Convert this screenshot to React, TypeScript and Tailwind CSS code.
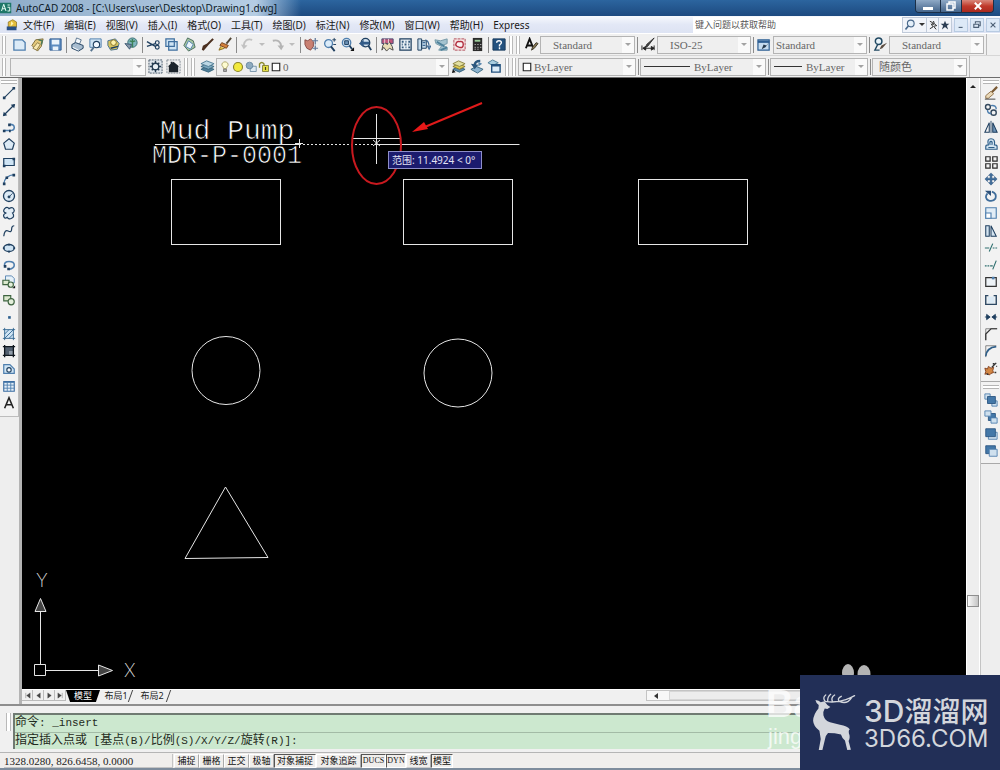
import type { ReactNode } from 'react';
import clsx from 'clsx';

const navy = '#1f3f5f';
const blue = '#4f7fae';
const pale = '#cfe4f4';

const icons: Record<string, ReactNode> = {
  new: <path d="M2 3h9l3 3v8H2z" fill="#dcebf7" stroke={blue} strokeWidth="1.4" />,
  open: (
    <>
      <path d="M2 9l4-6 8-1-2 8-4 5z" fill="#e3c87c" stroke="#7a6a3a" />
      <path d="M3 12l5-6 3 2-4 6z" fill="#f7e7b0" stroke="#8c7b45" />
      <path d="M9 3l4 1-1 4" fill="none" stroke="#4b7a59" strokeWidth="1.5" />
    </>
  ),
  save: (
    <>
      <path d="M2 2h12v12H2z" fill="#5d8cc0" stroke="#2f5d92" />
      <path d="M4 3h8v5H4zM5 10h6v4H5z" fill="#eaf3fb" />
    </>
  ),
  print: (
    <>
      <path d="M5 7l2-6 5 2-2 5" fill="#f4f8fc" stroke="#5d7690" />
      <path d="M2 8l4-2 8 3v3l-5 3-7-3z" fill="#a9bdd0" stroke={navy} />
      <path d="M3 11l6 3" stroke="#fff" />
    </>
  ),
  preview: (
    <>
      <path d="M2 2h12v9H2z" fill={pale} stroke={blue} />
      <circle cx="9" cy="8" r="3.4" fill="#f3f9ff" stroke={navy} strokeWidth="1.2" />
      <path d="M6.500 10.500L3 15" stroke="#56748f" strokeWidth="2" />
    </>
  ),
  publish: (
    <>
      <path d="M2 4l8-2 4 5-2 6-7 1-3-5z" fill="#d7c45f" stroke="#46708f" />
      <circle cx="8" cy="6" r="3" fill="#fff3a8" stroke="#806d26" />
      <path d="M5 12l8-2" stroke={navy} strokeWidth="1.5" />
    </>
  ),
  globe: (
    <>
      <circle cx="9" cy="6" r="5" fill="#7fb6bf" stroke="#3a6d70" />
      <path d="M6 4q3 2 6 0M9 2v9" stroke="#3c8055" strokeWidth="1.5" fill="none" />
      <path d="M1 7l7 1-2 5z" fill="#8798aa" stroke="#3a5670" />
    </>
  ),
  cut: (
    <>
      <path d="M1 5l9 5M1 10l9-3" stroke={navy} strokeWidth="1.4" />
      <circle cx="12" cy="6" r="2" fill="none" stroke={navy} strokeWidth="1.3" />
      <circle cx="12" cy="11" r="2" fill="none" stroke={navy} strokeWidth="1.3" />
    </>
  ),
  copy: <path d="M2 2h9v8H2zM5 5h9v9H5z" fill={pale} stroke="#3f6f9e" strokeWidth="1.3" />,
  paste: (
    <>
      <path d="M6 1l6 3 2 7-7 4-5-6z" fill="#a7c7a1" stroke="#466b5c" />
      <path d="M7 4l5 4-3 5-5-3z" fill="#eaf4fb" stroke={blue} />
    </>
  ),
  brush: <path d="M14 2L8 8M8 8l-5 6 1-4z" stroke="#4b2f1f" strokeWidth="2.2" fill="#4b2f1f" />,
  match: (
    <>
      <path d="M14 1L9 7" stroke="#514637" strokeWidth="2" />
      <path d="M4 6l7 3-2 3-7-3z" fill="#d4803b" stroke="#74411c" />
      <path d="M3 10l-2 4 6-2" fill="#e9c64a" stroke="#8a6c1f" />
    </>
  ),
  undo: (
    <>
      <path d="M13 3Q5 1 4 9" fill="none" stroke="#c2c2c2" strokeWidth="2" />
      <path d="M1 8l3 5 4-4z" fill="#c2c2c2" />
    </>
  ),
  redo: (
    <>
      <path d="M3 4q8-2 9 6" fill="none" stroke="#b4b4b4" strokeWidth="2" />
      <path d="M8 9l4 5 3-5z" fill="#b4b4b4" />
    </>
  ),
  pan: (
    <>
      <path d="M1 3l3 1 3-2 3 3v5l-3 4-4-2-2-4z" fill="#c98072" stroke="#874b45" />
      <path d="M12 1v7M9 4h6M12 9v5M9 12h6" stroke="#5f789a" strokeWidth="1.3" />
    </>
  ),
  zoomRt: (
    <>
      <circle cx="7" cy="7" r="4.200" fill="#dcecf9" stroke={blue} strokeWidth="1.4" />
      <path d="M9.500 10l4 5" stroke={navy} strokeWidth="2" />
      <path d="M11 3h4M13 1v4M12 8h3" stroke={navy} />
    </>
  ),
  zoomWin: (
    <>
      <circle cx="7" cy="6" r="4.500" fill="#cfe0ef" stroke={blue} strokeWidth="1.4" />
      <path d="M5 4h4v4H5z" fill="#6d93b7" stroke={navy} />
      <path d="M10 9l3 4" stroke={navy} strokeWidth="2" />
      <path d="M15 11v4h-4z" fill="#111" />
    </>
  ),
  zoomPrev: (
    <>
      <circle cx="8" cy="6" r="4.500" fill="#cfe0ef" stroke={navy} strokeWidth="1.5" />
      <path d="M11 9l3 5" stroke={navy} strokeWidth="2" />
      <path d="M1 7l5-4v2h6v3H6v3z" fill="#325b88" />
    </>
  ),
  props: (
    <>
      <path d="M2 2h12v5H2z" fill="#c0567c" stroke="#474a70" />
      <path d="M3 9l2-3 3 2 2-3 3 5 1 4-4-2-3 3-3-4-2 3z" fill="#e8ddb8" stroke="#454545" />
      <path d="M5 2v5M9 2v5" stroke="#e9d5df" />
    </>
  ),
  center: (
    <>
      <path d="M2 2h12v12H2z" fill="#eaf1f6" stroke={navy} strokeWidth="1.3" />
      <path d="M4 5h2M8 5h1M11 5h2M4 8h1M7 8h2M11 8h1M4 11h2M8 11h1M11 11h2" stroke="#33597d" strokeWidth="2" />
    </>
  ),
  palette: (
    <>
      <path d="M2 2h4v12H2zM6 4h5v8H6z" fill="#c7dcec" stroke={navy} />
      <path d="M7 6h3M7 9h3M10 3q4 1 4 8M12 9l2 4 2-4" stroke="#3f6a96" fill="none" strokeWidth="1.300" />
    </>
  ),
  sheet: (
    <>
      <path d="M1 3l6 1 7-2v5l-5 2 5 2v3H5l3-4-6-3z" fill="#a4c3cf" stroke="#7296a5" />
      <path d="M3 5l8 5M7 14l7-3" stroke="#4e819b" strokeWidth="2" />
    </>
  ),
  markup: (
    <>
      <path d="M2 2h12v12H2z" fill="#f6e4e4" stroke="#b04a56" strokeDasharray="3 1" />
      <path d="M4 8q1-4 4-3 4-1 4 3t-4 3-4-3z" fill="#f9f3f3" stroke="#b22f40" strokeWidth="1.5" />
    </>
  ),
  calc: (
    <>
      <path d="M3 1h10v14H3z" fill="#2b2b2b" />
      <path d="M5 3h6v2H5z" fill="#9ecf9c" />
      <path d="M5 8h1M8 8h1M11 8h1M5 11h1M8 11h1M11 11h1M5 13h1M8 13h1" stroke="#eee" />
    </>
  ),
  help: (
    <>
      <path d="M1 2h13v12H1z" fill="#24527f" stroke="#173a5d" />
      <path d="M5 6q0-2 2.500-2T10 6q0 1-2 2.500V10M8 11v2" fill="none" stroke="#fff" strokeWidth="1.500" />
    </>
  ),
  gear: (
    <>
      <path d="M1 1h14v14H1z" fill="#dfe6ec" stroke="#47596a" strokeDasharray="2 1" />
      <path d="M8 2v12M2 8h12M4 4l8 8M12 4l-8 8" stroke="#253c52" strokeWidth="1.500" />
      <circle cx="8" cy="8" r="3.500" fill="#e9f0f5" stroke="#253c52" strokeWidth="1.500" />
    </>
  ),
  home: (
    <>
      <path d="M1 1h14v14H1z" fill="none" stroke="#7d8791" strokeDasharray="2 1" />
      <path d="M2 8l3-3V3h2v1l1-1 6 5h-1v6H3V8z" fill="#1c242c" />
    </>
  ),
  layers: (
    <>
      <path d="M1 11l6-3 8 3-6 3z" fill="#4f7f99" stroke="#3a667f" />
      <path d="M1 8l6-3 8 3-6 3z" fill="#7ba7bd" stroke="#3a667f" />
      <path d="M1 5l6-3 8 3-6 3z" fill="#bcd7e4" stroke="#4f7d95" />
    </>
  ),
  layerState: (
    <>
      <path d="M2 11l6-3 7 3-6 3z" fill="#5b89a8" stroke="#38637f" />
      <path d="M2 8l6-3 7 3-6 3z" fill="#d9c955" stroke="#85772a" />
      <path d="M2 5l6-3 7 3-6 3z" fill="#e2dfa0" stroke="#8b8341" />
      <path d="M1 15l1-4 3 3z" fill="#111" />
    </>
  ),
  layerPrev: (
    <>
      <path d="M2 11l6-3 7 3-6 4z" fill="#8bb2cf" stroke="#3a667f" />
      <path d="M12 2Q6 2 6 7" fill="none" stroke="#2d587f" strokeWidth="2.500" />
      <path d="M2 5l4 6 4-5z" fill="#2d587f" />
      <path d="M10 3l4 2-4 3z" fill="#5d89ad" />
    </>
  ),
  layerIso: (
    <>
      <path d="M1 4l5-3 6 3-6 3z" fill="#a8cde0" stroke="#4f7d95" />
      <path d="M5 6h9v8H5z" fill="#dcecf8" stroke="#24527f" strokeWidth="1.500" />
      <path d="M5 7h9" stroke="#24527f" strokeWidth="2" />
    </>
  ),
  textStyle: (
    <>
      <path d="M2 12L6 2l4 10M3 9h6" fill="none" stroke="#111" strokeWidth="2" />
      <path d="M15 7l-4 5-3 2 1-3 4-5z" fill="#8a7a55" stroke="#3d372b" />
    </>
  ),
  dimStyle: (
    <>
      <path d="M1 9v5M14 9v5M2 12h12M2 12l3-2v4zM14 12l-3-2v4z" stroke="#222" fill="#222" />
      <path d="M14 1L7 10l-2 1 1-3z" fill="#444" stroke="#333" />
    </>
  ),
  tableStyle: (
    <>
      <path d="M1 3h12v11H1z" fill="#c5dcf0" stroke="#2e5f93" strokeWidth="1.300" />
      <path d="M1 5h12" stroke="#2e5f93" strokeWidth="2.500" />
      <path d="M15 3l-6 8-4 2 2-5 3 1z" fill="#25394d" />
    </>
  ),
  leaderStyle: (
    <>
      <circle cx="6" cy="4.500" r="3.500" fill="#e9f3f8" stroke="#204861" strokeWidth="1.600" />
      <path d="M5 8l-3 6h5" stroke="#204861" fill="none" strokeWidth="1.500" />
      <path d="M15 6l-5 6-3 1 2-4z" fill="#594b3f" />
    </>
  ),
  line: (
    <>
      <path d="M3 13L13 3" stroke={navy} strokeWidth="1.300" />
      <path d="M1 12h3v3H1zM12 1h3v3h-3z" fill={navy} />
    </>
  ),
  xline: (
    <>
      <path d="M2 14L14 2" stroke={navy} strokeWidth="1.500" />
      <path d="M1 15l1-5 4 4zM15 1l-5 1 4 4z" fill={navy} />
    </>
  ),
  pline: (
    <>
      <path d="M2 12h7q5 0 5-3.500T9 5" fill="none" stroke={blue} strokeWidth="1.800" />
      <path d="M1 11h3v3H1zM8 11h2v3H8zM7 4h3v3H7z" fill={navy} />
    </>
  ),
  polygon: <path d="M8 2l6 5-2 7H4L2 7z" fill="#dceaf5" stroke={navy} strokeWidth="1.400" />,
  rect: (
    <>
      <path d="M2 4h12v8H2z" fill={pale} stroke={navy} strokeWidth="1.400" />
      <path d="M1 11h3v3H1zM12 3h3v3h-3z" fill={navy} />
    </>
  ),
  arc: (
    <>
      <path d="M2 14Q3 4 14 3" fill="none" stroke={blue} strokeWidth="1.600" />
      <path d="M1 12h3v3H1zM4 5h3v3H4zM12 2h3v3h-3z" fill={navy} />
    </>
  ),
  circle: (
    <>
      <circle cx="8" cy="8" r="6.300" fill="#dceaf5" stroke={navy} strokeWidth="1.500" />
      <path d="M8 9l4-4M7 8h2v2H7z" stroke={navy} fill={navy} />
    </>
  ),
  cloud: (
    <path
      d="M5 8Q0 7 3 3q3-3 5 0 5-3 6 2 0 2-2 3 3 4-1 6-3 2-5-1-3 2-4-1-1-3 3-4z"
      fill="#e3edf5"
      stroke={navy}
      strokeWidth="1.400"
    />
  ),
  spline: <path d="M2 14q1-8 5-6t4-2 3-4" fill="none" stroke={navy} strokeWidth="1.400" />,
  ellipse: (
    <>
      <ellipse cx="8" cy="8" rx="6" ry="4" fill={pale} stroke={navy} strokeWidth="1.500" />
      <path d="M1 7h2v2H1zM13 7h2v2h-2zM7 3h2v2H7zM7 11h2v2H7z" fill={navy} />
    </>
  ),
  ellipseArc: (
    <>
      <path d="M3 9Q2 4 8 4t6 4-6 5" fill="none" stroke={blue} strokeWidth="1.800" />
      <path d="M2 8h3v3H2zM6 11h3v3H6z" fill={navy} />
    </>
  ),
  insert: (
    <>
      <path d="M4 1h7l3 3v5H4z" fill="#e6f1f9" stroke={blue} />
      <path d="M1 6h7v5H1z" fill="#dce9cf" stroke="#3e6440" strokeWidth="1.300" />
      <circle cx="10" cy="11" r="3" fill="#e4efdc" stroke="#3e6440" strokeWidth="1.300" />
      <path d="M15 12v3h-3z" fill="#111" />
    </>
  ),
  block: (
    <>
      <path d="M2 3h8v6H2z" fill="#dce9cf" stroke="#3e6440" strokeWidth="1.300" />
      <circle cx="10.500" cy="10" r="3.500" fill="#e4efdc" stroke="#3e6440" strokeWidth="1.300" />
    </>
  ),
  point: <path d="M7 7h3v3H7z" fill="#2c5f8e" />,
  hatch: (
    <>
      <path d="M3 3h10v10H3z" fill={pale} />
      <path d="M3 1v14M13 1v14M1 3h14M1 13h14M3 8l5-5M3 13L13 3M8 13l5-5" stroke="#2f638f" />
    </>
  ),
  gradient: (
    <>
      <path d="M3 3h10v10H3z" fill="#536171" />
      <path d="M8 8h5v5H8z" fill="#8f9ba8" />
      <path d="M3 1v14M13 1v14M1 3h14M1 13h14" stroke="#101820" strokeWidth="1.500" />
    </>
  ),
  region: (
    <>
      <path d="M2 3h7l5 5v5H2z" fill={pale} stroke={blue} strokeWidth="1.400" />
      <circle cx="8" cy="9" r="2.500" fill="#f5f9fc" stroke={navy} strokeWidth="1.300" />
    </>
  ),
  table: (
    <>
      <path d="M2 3h12v11H2z" fill="#e5eff8" stroke="#3d6da1" strokeWidth="1.300" />
      <path d="M2 4h12M2 7h12M2 10.500h12M6 3v11M10 3v11" stroke="#4f7fae" />
    </>
  ),
  mtext: <path d="M3 14L8 2l5 12M5 10h6" fill="none" stroke="#222" strokeWidth="1.800" />,
  erase: (
    <>
      <path d="M15 1L8 8" stroke="#7a5a35" strokeWidth="2.500" />
      <path d="M2 11l6-5 3 3-6 5H2z" fill="#ead9b8" stroke="#8a6b43" />
      <path d="M1 15h12" stroke="#333" />
    </>
  ),
  copyObj: (
    <>
      <circle cx="4.500" cy="4.500" r="2.800" fill="none" stroke="#34495e" strokeWidth="1.600" />
      <circle cx="11" cy="11" r="3" fill="none" stroke="#34495e" strokeWidth="1.600" />
      <path d="M8 3q6-1 6 4M4 8q0 4 4 4" fill="none" stroke={blue} strokeWidth="1.600" />
    </>
  ),
  mirror: (
    <>
      <path d="M6 3v11H1z" fill="#f2f2f2" stroke={navy} strokeWidth="1.200" />
      <path d="M10 3v11h5z" fill="#6d93b7" stroke={navy} strokeWidth="1.200" />
      <path d="M8 1v14" stroke={navy} />
    </>
  ),
  offset: (
    <path
      d="M2 14v-3q0-2 3-2-2-7 3-7t4 7q3 0 3 2v3zM5 12h7M7 9q-1-4 1-4t1 4"
      fill="#d2e4f1"
      stroke="#2f5f89"
      strokeWidth="1.300"
    />
  ),
  array: <path d="M2 2h5v5H2zM10 2h5v5h-5zM2 10h5v5H2zM10 10h5v5h-5z" fill="#f2f2f2" stroke="#2b2b2b" strokeWidth="1.400" />,
  move: (
    <path
      d="M8 1l3 3H9v3h3V5l3 3-3 3V9H9v3h2l-3 3-3-3h2V9H4v2L1 8l3-3v2h3V4H5z"
      fill="#3f6d9b"
      stroke="#2c5079"
      strokeWidth="0.500"
    />
  ),
  rotate: (
    <>
      <path d="M4 5q-4 5 1 8 5 2 8-2 2-6-4-8" fill="none" stroke="#3f6d9b" strokeWidth="2" />
      <path d="M1 2h7v6z" fill="#2c5079" />
    </>
  ),
  scale: (
    <>
      <path d="M2 2h12v12H2z" fill="#e2edf6" stroke={blue} strokeWidth="1.300" />
      <path d="M2 8h6v6H2z" fill="#fff" stroke={blue} strokeWidth="1.300" />
    </>
  ),
  stretch: <path d="M2 2h4v12H2zM8 2l6 12H8z" fill="#d4e4f0" stroke={navy} strokeWidth="1.200" />,
  trim: <path d="M1 8h5M10 8h2M13 8h2M6 12l4-9" stroke="#2f6f6f" strokeWidth="1.300" />,
  extend: <path d="M1 9h2M4 9h2M7 9h3M10 13l4-10" stroke="#2f6f6f" strokeWidth="1.300" />,
  breakPt: (
    <>
      <path d="M2 3h12v10H2z" fill="#eef3f7" stroke="#333" strokeWidth="1.400" />
      <path d="M9 2h3v3H9z" fill={blue} />
    </>
  ),
  break: (
    <>
      <path d="M4 4h8v8H4z" fill="#dceaf5" />
      <path d="M5 3H2v10h12V3h-3" fill="none" stroke="#2c4762" strokeWidth="1.600" />
    </>
  ),
  join: <path d="M1 8h3M12 8h3M3 5l4 3-4 3zM13 5L9 8l4 3z" stroke={navy} fill={navy} />,
  chamfer: (
    <>
      <path d="M2 15V2h13" fill="none" stroke="#777" />
      <path d="M2 15V8l6-6h7" fill="none" stroke="#333" strokeWidth="1.400" />
    </>
  ),
  fillet: (
    <>
      <path d="M2 15V2h12" fill="none" stroke="#777" />
      <path d="M2 14Q3 4 14 3" fill="none" stroke="#2f5f89" strokeWidth="1.800" />
    </>
  ),
  explode: (
    <>
      <path d="M1 7l3 1 1-3 3 2 3-1-1 4 1 2-3 1-2 2-2-2-3 1 1-3z" fill="#d28745" stroke="#7d3b1c" />
      <path d="M9 6l5-5M3 14h2M12 12h2M10 2h2M14 5h1" stroke="#333" strokeWidth="1.500" />
    </>
  ),
  front: (
    <>
      <path d="M1 1h6v6H1zM9 9h6v6H9z" fill="#cfe0ee" stroke={blue} />
      <path d="M4 4h9v8H4z" fill="#4478a8" stroke="#2a5580" />
    </>
  ),
  back: (
    <>
      <path d="M5 4h8v8H5z" fill="#4478a8" stroke="#2a5580" />
      <path d="M1 1h7v6H1zM8 9h7v6H8z" fill="#cfe0ee" stroke={blue} />
    </>
  ),
  above: (
    <>
      <path d="M5 6h10v8H5z" fill="#cfe0ee" stroke={blue} />
      <path d="M2 2h11v9H2z" fill="#4478a8" stroke="#2a5580" />
    </>
  ),
  under: (
    <>
      <path d="M2 2h11v9H2z" fill="#4478a8" stroke="#2a5580" />
      <path d="M6 6h9v8H6z" fill="#cfe0ee" stroke={blue} />
    </>
  ),
  bulb: (
    <>
      <path d="M8 1q5 1 4 5-2 2-2 4H6q0-2-2-4-1-4 4-5z" fill="#fdfbd0" stroke="#9b9252" />
      <path d="M6 11h4v3H6z" fill="#a9a9a9" stroke="#6b6b6b" />
    </>
  ),
  sun: <circle cx="8" cy="8" r="6" fill="#f2e93d" stroke="#8a842a" strokeWidth="1.500" />,
  freeze: (
    <>
      <path d="M7 7h8v7H7z" fill="#dce8f1" stroke="#5d7f99" />
      <circle cx="6" cy="6" r="4.500" fill="#8eaabf" stroke="#5d7f99" />
    </>
  ),
  lock: (
    <>
      <path d="M2 9V4q3-4 6 0v3" fill="none" stroke="#8c8a2d" strokeWidth="1.800" />
      <path d="M6 6h8v8H6z" fill="#e2dc45" stroke="#6f6c26" />
      <path d="M10 8v4" stroke="#44421c" strokeWidth="1.500" />
    </>
  ),
  swatch: <path d="M2 2h12v12H2z" fill="#fff" stroke="#222" strokeWidth="1.800" />,
  search: (
    <>
      <circle cx="9" cy="6" r="4.500" fill="#e4effa" stroke="#49698c" strokeWidth="1.500" />
      <path d="M6 9l-4 5" stroke="#49698c" strokeWidth="2.200" />
    </>
  ),
  comm: (
    <>
      <path d="M3 2l4 2 2-2 1 4 4 3-5 1 4 5M5 6l3 5-5 3" fill="none" stroke="#333" strokeWidth="1.600" />
      <circle cx="8" cy="6" r="2" fill="#555" />
    </>
  ),
  star: <path d="M8 1l2 5h5l-4 3 2 6-5-4-5 4 2-6-4-3h5z" fill="#2c3e55" />,
  dwg: (
    <>
      <path d="M3 4l6-3 5 3v7H3z" fill="#e3bd3c" stroke="#8d7220" />
      <path d="M1 10h13v5H1z" fill="#284f86" />
      <path d="M7 3l3 3-4 4z" fill="#fff3ae" />
    </>
  ),
  app: (
    <>
      <path d="M0 1h15v14H0z" fill="#1e7768" />
      <path d="M2 12l3-9 3 9M3 9h4M10 4h3M10 7h3v5h-3" fill="none" stroke="#e8fff7" strokeWidth="1.300" />
    </>
  ),
};

function Glyph({ name, className = 'size-[15px]' }: { name: string; className?: string }) {
  return (
    <svg viewBox="0 0 16 16" className={clsx('shrink-0', className)} aria-hidden="true">
      {icons[name]}
    </svg>
  );
}

function Tool({ name }: { name: string }) {
  return (
    <button type="button" aria-label={name} className="flex size-[18px] shrink-0 items-center justify-center">
      <Glyph name={name} />
    </button>
  );
}

function Caret({ className }: { className?: string }) {
  return (
    <svg viewBox="0 0 8 4" className={clsx('h-[3px] w-1.5 shrink-0', className)} fill="currentColor" aria-hidden="true">
      <path d="M0 0h8L4 4z" />
    </svg>
  );
}

function Sep() {
  return (
    <span className="flex h-4 w-1 shrink-0 justify-center">
      <span className="w-px bg-[#8b8b8b]" />
    </span>
  );
}

function Grip({ className }: { className?: string }) {
  return <span className={clsx('h-[18px] w-1 shrink-0 border-x border-[#b9b9b9] bg-white', className)} />;
}

function GripFlat() {
  return <span className="h-1 w-4 shrink-0 border-y border-[#b5b5b5] bg-white" />;
}

type ComboProps = {
  label: string;
  value: string;
  className: string;
  lead?: ReactNode;
  textClass?: string;
};

function Combo({ label, value, className, lead, textClass }: ComboProps) {
  return (
    <div className={clsx('flex h-[18px] shrink-0 items-center border border-[#b4b4b4] bg-[#efefef]', className)}>
      {lead}
      <select
        aria-label={label}
        defaultValue={value}
        className={clsx(
          'h-4 min-w-0 flex-1 appearance-none bg-transparent font-["Liberation_Serif","Noto_Sans_CJK_SC",serif] text-[11px] leading-4 text-[#666] outline-none',
          textClass,
        )}
      >
        <option>{value}</option>
      </select>
      <span className="pointer-events-none flex h-4 w-3 items-center justify-center bg-[#fafafa] text-[#a3a3a3]">
        <Caret />
      </span>
    </div>
  );
}

const menus = ['文件(F)', '编辑(E)', '视图(V)', '插入(I)', '格式(O)', '工具(T)', '绘图(D)', '标注(N)', '修改(M)', '窗口(W)', '帮助(H)', 'Express'];

const drawTools = [
  'line', 'xline', 'pline', 'polygon', 'rect', 'arc', 'circle', 'cloud', 'spline', 'ellipse',
  'ellipseArc', 'insert', 'block', 'point', 'hatch', 'gradient', 'region', 'table', 'mtext',
];

const modifyTools = [
  'erase', 'copyObj', 'mirror', 'offset', 'array', 'move', 'rotate', 'scale', 'stretch',
  'trim', 'extend', 'breakPt', 'break', 'join', 'chamfer', 'fillet', 'explode',
];

const statusModes = [
  { name: '捕捉', width: 'w-[25px]', on: false },
  { name: '栅格', width: 'w-[25px]', on: false },
  { name: '正交', width: 'w-[25px]', on: false },
  { name: '极轴', width: 'w-[25px]', on: false },
  { name: '对象捕捉', width: 'w-[42px]', on: true },
  { name: '对象追踪', width: 'w-[45px]', on: false },
  { name: 'DUCS', width: 'w-[25px]', on: true },
  { name: 'DYN', width: 'w-[20px]', on: true },
  { name: '线宽', width: 'w-[25px]', on: false },
  { name: '模型', width: 'w-[22px]', on: true },
];

function TitleBar() {
  return (
    <header className="flex h-4 shrink-0 items-start bg-linear-to-b from-[#2c659f] to-[#1d4a80]">
      <div className="flex h-4 items-center gap-1 bg-linear-to-r from-[#8fadca] via-[#b5cde4] via-85% to-transparent pr-6">
        <Glyph name="app" className="size-3" />
        <h1 className="text-[10px] leading-4 whitespace-nowrap text-[#0d1a28]">
          AutoCAD 2008 - [C:\Users\user\Desktop\Drawing1.dwg]
        </h1>
      </div>
      <div className="mr-1.5 ml-auto flex h-[13px] overflow-hidden rounded-b border border-t-0 border-[#1b2f47] text-white">
        <button type="button" aria-label="Minimize" className="flex w-[25px] items-center justify-center border-r border-[#1b2f47] bg-linear-to-b from-[#8fa9c6] to-[#45658b]">
          <span className="mt-1 h-[3px] w-2.5 bg-white" />
        </button>
        <button type="button" aria-label="Restore" className="flex w-[21px] items-center justify-center border-r border-[#1b2f47] bg-linear-to-b from-[#8fa9c6] to-[#45658b]">
          <svg viewBox="0 0 10 10" className="size-2.5" fill="none" stroke="#fff" strokeWidth="1.5">
            <path d="M3 3V1h6v6H7M1 3h6v6H1z" />
          </svg>
        </button>
        <button type="button" aria-label="Close" className="flex w-[31px] items-center justify-center bg-linear-to-b from-[#d8877b] via-[#c0392b] to-[#a92a1f]">
          <svg viewBox="0 0 10 10" className="size-2" stroke="#fff" strokeWidth="2.4">
            <path d="M1 1l8 8M9 1l-8 8" />
          </svg>
        </button>
      </div>
    </header>
  );
}

function MenuBar() {
  return (
    <nav className="flex h-[17px] shrink-0 items-center bg-linear-to-b from-[#f7f9fd] via-[#e3e8f6] to-[#dde3f3] pl-1.5">
      <Glyph name="dwg" className="size-3" />
      <div className="ml-[5px] flex gap-2.5">
        {menus.map((m) => (
          <button key={m} type="button" className="text-[10px] leading-4 whitespace-nowrap text-[#1a1a1a]">
            {m}
          </button>
        ))}
      </div>
      <input
        type="text"
        aria-label="帮助"
        placeholder="键入问题以获取帮助"
        className="ml-auto h-4 w-[209px] bg-white px-0.5 text-[9px] text-[#444] placeholder:text-[#555]"
      />
      <div className="flex h-4 shrink-0 items-center border border-[#c0cad9] bg-[#f1f4fa]">
        <button type="button" aria-label="Search" className="flex w-3.5 justify-center">
          <Glyph name="search" className="size-3" />
        </button>
        <button type="button" aria-label="Search options" className="flex h-3.5 w-2.5 items-center justify-center border-r border-[#c0cad9] text-[#333]">
          <Caret className="w-1" />
        </button>
        <button type="button" aria-label="Communication center" className="flex h-3.5 w-3 items-center justify-center border-r border-[#c0cad9]">
          <Glyph name="comm" className="size-2.5" />
        </button>
        <button type="button" aria-label="Favorites" className="flex w-3 justify-center">
          <Glyph name="star" className="size-2.5" />
        </button>
      </div>
      <div className="flex h-3.5 shrink-0 gap-0.5 pl-0.5">
        {['M2 8h5', 'M3 3V1h6v5H7M1 4h6v4H1z', 'M2 2l6 6M8 2L2 8'].map((d) => (
          <button key={d} type="button" aria-label="Drawing window" className="flex w-3.5 items-center justify-center border border-[#b8cbe2] bg-[#dde9f7]">
            <svg viewBox="0 0 10 10" className="size-2" fill="none" stroke="#4d6076" strokeWidth="1.4">
              <path d={d} />
            </svg>
          </button>
        ))}
      </div>
    </nav>
  );
}

function StandardBar() {
  return (
    <div className="flex h-[22px] shrink-0 items-center border-t border-white bg-[#f0f0f0]">
      <Grip className="mr-1 ml-0.5" />
      {['new', 'open', 'save'].map((n) => <Tool key={n} name={n} />)}
      <Sep />
      {['print', 'preview', 'publish', 'globe'].map((n) => <Tool key={n} name={n} />)}
      <Sep />
      {['cut', 'copy', 'paste', 'brush', 'match'].map((n) => <Tool key={n} name={n} />)}
      <Sep />
      <Tool name="undo" />
      <Caret className="mx-[3px] text-[#bdbdbd]" />
      <Tool name="redo" />
      <Caret className="mx-[3px] text-[#bdbdbd]" />
      <Sep />
      {['pan', 'zoomRt', 'zoomWin', 'zoomPrev'].map((n) => <Tool key={n} name={n} />)}
      <Sep />
      {['props', 'center', 'palette', 'sheet', 'markup', 'calc'].map((n) => <Tool key={n} name={n} />)}
      <Sep />
      <Tool name="help" />
      <Grip className="mx-px border-[#9c9c9c]" />
      <Grip className="mx-0.5" />
      <Tool name="textStyle" />
      <Combo label="Text style" value="Standard" className="w-[95px]" textClass="pl-3" />
      <Sep />
      <Tool name="dimStyle" />
      <Combo label="Dimension style" value="ISO-25" className="w-[94px]" textClass="pl-3" />
      <Sep />
      <Tool name="tableStyle" />
      <Combo label="Table style" value="Standard" className="w-[94px]" textClass="pl-0.5" />
      <Sep />
      <Tool name="leaderStyle" />
      <Combo label="Multileader style" value="Standard" className="w-[95px]" textClass="pl-3" />
      <span className="ml-0.5 h-full w-px bg-[#b9b9b9]" />
    </div>
  );
}

function LayerBar() {
  return (
    <div className="flex h-[22px] shrink-0 items-center border-t border-[#d6d6d6] bg-[#f0f0f0]">
      <Grip className="mr-1 ml-0.5" />
      <Combo label="Workspace" value="" className="w-[136px]" />
      <Tool name="gear" />
      <Tool name="home" />
      <Grip className="mx-0.5" />
      <Grip className="mr-[3px] ml-px" />
      <Tool name="layers" />
      <Combo
        label="Layer"
        value="0"
        className="w-[233px]"
        textClass="pl-0.5"
        lead={
          <span className="flex shrink-0 items-center gap-px pl-0.5">
            <Glyph name="bulb" className="size-3" />
            <Glyph name="sun" className="size-3" />
            <Glyph name="freeze" className="size-3" />
            <Glyph name="lock" className="size-3" />
            <Glyph name="swatch" className="size-2.5" />
          </span>
        }
      />
      <Tool name="layerState" />
      <Tool name="layerPrev" />
      <Tool name="layerIso" />
      <Grip className="mx-0.5 border-[#9c9c9c]" />
      <Grip className="mr-0.5 ml-px" />
      <Combo
        label="Color"
        value="ByLayer"
        className="w-[118px]"
        textClass="pl-0.5"
        lead={<Glyph name="swatch" className="ml-[3px] size-2.5" />}
      />
      <Sep />
      <Combo
        label="Linetype"
        value="ByLayer"
        className="w-[126px]"
        textClass="pl-1"
        lead={<span className="ml-[3px] h-px w-[46px] bg-[#333]" />}
      />
      <Sep />
      <Combo
        label="Lineweight"
        value="ByLayer"
        className="w-[98px]"
        textClass="pl-1"
        lead={<span className="ml-[3px] h-px w-7 bg-[#333]" />}
      />
      <Sep />
      <Combo label="Plot style" value="随颜色" className="w-[95px]" textClass="pl-1.5 text-[10px]" />
      <span className="ml-0.5 h-full w-px bg-[#b9b9b9]" />
    </div>
  );
}

function Drawing() {
  return (
    <div className="relative min-h-0 flex-1 overflow-hidden bg-black">
      {/* model space, shifted so shapes use window coordinates */}
      <svg className="block h-full w-full" fill="none" stroke="#e6e6e6">
        <g transform="translate(-22 -78)">
          {/* the dark outline thins the glyphs to a single-stroke look */}
          <g fill="#fff" stroke="#000" strokeWidth="0.7" className='font-["Liberation_Mono",monospace]'>
            <text x="160" y="139" className="text-[28px]">Mud Pump</text>
            <text x="152" y="163" className="text-[25px]">MDR-P-0001</text>
          </g>
          <g fill="#d8d8d8" stroke="none" className='font-["Inter",sans-serif] font-extralight'>
            <text x="36" y="587" className="text-[18px]">Y</text>
            <text x="124" y="677" className="text-[18px]">X</text>
          </g>
          <path d="M155 144.500H299M377 144.500H519.500" />
          <path d="M299 144.500H376" strokeDasharray="2 2" />
          <path d="M295 143.500h8M299.500 139v9" />
          <path d="M376.500 114v50M352 138.500h48" />
          <path d="M373 140l7 6M380 140l-7 6" />
          <rect x="171.500" y="179.500" width="109" height="65" />
          <rect x="403.500" y="179.500" width="109" height="65" />
          <rect x="638.500" y="179.500" width="109" height="65" />
          <circle cx="226" cy="370.500" r="34" />
          <circle cx="458" cy="373" r="34" />
          <path d="M225.500 487L185 558.500L268 557.500z" />
          <path d="M34.500 664.500h11v11h-11zM40.500 664v-52M46 670.500h52" />
          <path d="M40.500 598.500l-5.500 13h11zM98.500 665v11l14-5.500z" fill="#444" />
          <ellipse cx="376.500" cy="145.500" rx="24.500" ry="38.500" stroke="#c8191f" strokeWidth="2" />
          <path d="M482 103L420 129" stroke="#e01a1a" strokeWidth="2" />
          <path d="M412 132l12-10 4 7z" fill="#e81818" stroke="none" />
        </g>
      </svg>
      <div className="absolute top-[73px] left-[366px] border border-[#8d8dc8] bg-[#1b1b6e] pr-1.5 pl-[3px] text-[10px] leading-4 whitespace-nowrap text-[#e2e2f4]">
        范围: 11.4924 &lt; 0°
      </div>
    </div>
  );
}

function LayoutTabs() {
  return (
    <div className="flex h-[15px] shrink-0 items-start border-t border-white bg-[#f0f0f0]">
      {['M2 1v6M7 1L3 4l4 3z', 'M6 1L2 4l4 3z', 'M2 1l4 3-4 3z', 'M1 1l4 3-4 3zM6 1v6'].map((d) => (
        <button key={d} type="button" aria-label="Scroll tabs" className="flex h-[11px] w-[11px] items-center justify-center border-r border-b border-[#bbb]">
          <svg viewBox="0 0 8 8" className="size-[7px]" fill="#444" stroke="#444" strokeWidth="0.4">
            <path d={d} />
          </svg>
        </button>
      ))}
      <div className="flex h-3 items-center text-[9px] leading-3 text-[#222]">
        <button type="button" className="h-3 w-[34px] bg-black text-white [clip-path:polygon(0_0,100%_0,88%_100%,12%_100%)]">
          模型
        </button>
        <button type="button" className="ml-0.5 h-3 w-7">布局1</button>
        <span className="h-3 w-1 shrink-0 -skew-x-[20deg] border-l border-[#444]" />
        <button type="button" className="ml-1 h-3 w-7">布局2</button>
        <span className="ml-0.5 h-3 w-1 -skew-x-[20deg] border-l border-[#444]" />
      </div>
      <div className="ml-auto flex h-[11px] w-[320px] border border-[#c4c4c4] bg-[#f7f7f7]">
        <button type="button" aria-label="Scroll left" className="flex w-[18px] items-center justify-center">
          <svg viewBox="0 0 4 6" className="h-1.5 w-1" fill="#333"><path d="M4 0v6L0 3z" /></svg>
        </button>
        <span className="ml-1 flex-1 border border-[#d6d6d6] bg-[#ededed]" />
      </div>
    </div>
  );
}

function VerticalScroll() {
  return (
    <div className="flex w-3.5 shrink-0 flex-col items-center border-x border-white bg-[#eeeeee]">
      <button type="button" aria-label="Scroll up" className="flex h-4 w-3 items-center justify-center text-[#222]">
        <Caret className="rotate-180" />
      </button>
      <span className="flex-1" />
      <button type="button" aria-label="Scroll thumb" className="mb-[97px] size-3 border border-[#8f8f8f] bg-linear-to-r from-[#fafafa] to-[#c4c4c4]" />
    </div>
  );
}

function Workspace() {
  return (
    <main className="flex min-h-0 flex-1 border-t border-[#6d6d6d] bg-[#eeeeee]">
      <aside className="w-[19px] shrink-0">
        <div className="flex flex-col items-center border-r border-b border-[#bdbdbd] bg-[#f2f2f2] pt-0.5 pb-1">
          <GripFlat />
          <div className="flex h-[328px] flex-col justify-between">
            {drawTools.map((n) => (
              <button key={n} type="button" aria-label={n} className="flex h-[17px] w-4 items-center justify-center">
                <Glyph name={n} className="size-3.5" />
              </button>
            ))}
          </div>
        </div>
      </aside>
      <div className="flex min-w-0 flex-1 flex-col border-l-3 border-[#b4b4b4]">
        <Drawing />
        <LayoutTabs />
      </div>
      <VerticalScroll />
      <aside className="w-5 shrink-0 border-l border-[#c4c4c4]">
        <div className="flex flex-col items-center border-b border-[#a9a9a9] bg-[#f2f2f2] pt-0.5 pb-1">
          <GripFlat />
          <div className="flex h-[293px] flex-col justify-between">
            {modifyTools.map((n) => (
              <button key={n} type="button" aria-label={n} className="flex h-[17px] w-4 items-center justify-center">
                <Glyph name={n} className="size-3.5" />
              </button>
            ))}
          </div>
        </div>
        <div className="flex flex-col items-center border-b border-[#a9a9a9] bg-[#f2f2f2] pt-[3px] pb-1">
          <GripFlat />
          <div className="flex flex-col pt-0.5">
            {['front', 'back', 'above', 'under'].map((n) => (
              <button key={n} type="button" aria-label={n} className="flex h-[17px] w-4 items-center justify-center">
                <Glyph name={n} className="size-3.5" />
              </button>
            ))}
          </div>
        </div>
      </aside>
    </main>
  );
}

const cjk = 'text-xs';

function CommandLine() {
  return (
    <section className="flex shrink-0 border-t-2 border-[#8e8e8e] bg-[#f0f0f0] pt-[7px] pb-[3px] pl-1.5">
      <Grip className="h-8 w-[5px]" />
      <div className='ml-0.5 flex-1 border-t-2 border-l-2 border-[#6f7a72] bg-[#cce8cf] font-["Liberation_Mono","Noto_Sans_CJK_SC",monospace] text-[11px] leading-4 whitespace-pre text-[#1f2a20]'>
        <p className="h-[17px]"><span className={cjk}>命令</span>: _insert</p>
        <label className="flex h-[17px] border-t border-[#a3bba6]">
          <span>
            <span className={cjk}>指定插入点或</span> [<span className={cjk}>基点</span>(B)/<span className={cjk}>比例</span>(S)/X/Y/Z/<span className={cjk}>旋转</span>(R)]:
          </span>
          <input type="text" className="min-w-0 flex-1 bg-transparent outline-none" />
        </label>
      </div>
    </section>
  );
}

function StatusBar() {
  return (
    <footer className="flex h-[18px] shrink-0 items-start border-t border-b-2 border-t-[#b5b5b5] border-b-[#7e8c9c] bg-[#f0eeec] pt-px pl-1">
      <output className='h-3.5 w-[169px] border-r border-b border-[#c4c4c4] font-["Liberation_Serif",serif] text-[11px] leading-3.5 text-[#222]'>
        1328.0280, 826.6458, 0.0000
      </output>
      <div className="ml-px flex">
        {statusModes.map((m) => (
          <button
            key={m.name}
            type="button"
            aria-pressed={m.on}
            className={clsx(
              'h-3.5 shrink-0 border text-center leading-3 whitespace-nowrap text-[#111]',
              m.width,
              m.on ? 'border-t-[#555] border-r-white border-b-white border-l-[#555]' : 'border-t-white border-r-[#aaa] border-b-[#ccc] border-l-white',
              m.name.startsWith('D') ? 'font-["Liberation_Serif",serif] text-[8px]' : 'text-[9px]',
            )}
          >
            {m.name}
          </button>
        ))}
      </div>
    </footer>
  );
}

function Watermark() {
  return (
    <>
      <div className='pointer-events-none absolute right-0 bottom-0 h-[110px] w-[236px] overflow-hidden font-["Liberation_Sans",sans-serif] text-white/75'>
        <svg viewBox="0 0 36 20" className="absolute top-1 left-[76px] h-5 w-9" fill="#b4b4b4">
          <ellipse cx="8" cy="9" rx="6" ry="9" />
          <ellipse cx="24" cy="10" rx="6.500" ry="9" />
        </svg>
        <p className="absolute top-6 left-0.5 text-[38px] leading-10 font-bold">Bai</p>
        <p className="absolute top-[65px] left-1 text-[22px] leading-6">jingyan</p>
      </div>
      <div className="absolute right-0 bottom-0 flex h-[95px] w-[200px] items-center bg-[#222f57] pl-2.5 text-[#d3d6dc]">
        <svg viewBox="210 335 150 190" className="h-[63px] w-[50px] shrink-0" aria-label="Deer">
          <path
            d="M226 362Q237 363 242 369L253 366L262 377L271 383L262 389L254 388Q248 398 250 408Q254 424 270 429L300 437Q322 440 330 451Q325 452 327 463Q332 474 326 486L333 512L322 513L315 484Q306 477 303 466Q285 462 264 462Q256 470 255 480L247 513L236 513L242 480L238 455Q220 442 219 425Q220 405 235 388L236 377Q228 373 226 362Z"
            fill="currentColor"
          />
          <path
            d="M256 367Q246 355 257 347M263 365Q262 353 272 345M258 367Q290 371 318 361Q332 356 344 349M278 368Q271 355 284 347M298 367Q290 358 304 351M300 367Q322 376 335 355"
            fill="none"
            stroke="currentColor"
            strokeWidth="4"
            strokeLinecap="round"
          />
        </svg>
        <div className="ml-1 whitespace-nowrap">
          <p className="flex items-center text-[28px] leading-8 font-medium">
            <span className='font-["Inter",sans-serif] text-[30px]'>3D</span>
            溜溜网
          </p>
          <p className='font-["Inter",sans-serif] text-2xl leading-6'>3D66.COM</p>
        </div>
      </div>
    </>
  );
}

export default function App() {
  return (
    <div className='relative flex h-screen flex-col overflow-hidden bg-[#f0f0f0] font-["Noto_Sans","Noto_Sans_CJK_SC",sans-serif]'>
      <TitleBar />
      <MenuBar />
      <StandardBar />
      <LayerBar />
      <Workspace />
      <CommandLine />
      <StatusBar />
      <Watermark />
    </div>
  );
}
